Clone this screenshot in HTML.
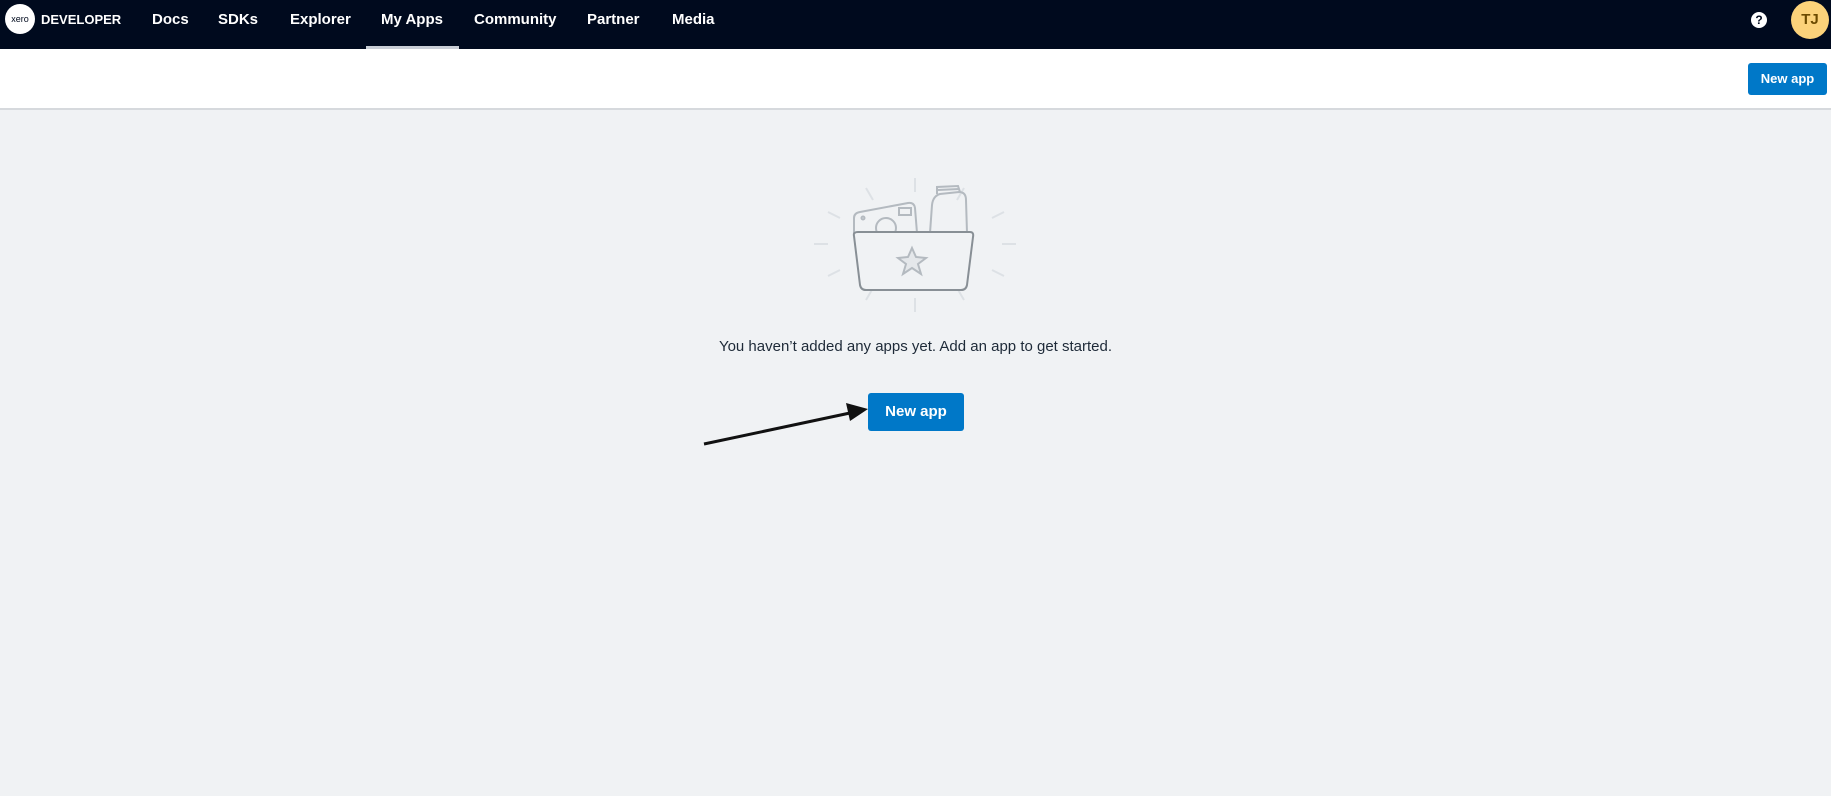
<!DOCTYPE html>
<html><head><meta charset="utf-8"><style>
body{margin:0;width:1831px;height:796px;background:#f0f2f4;font-family:"Liberation Sans",sans-serif;overflow:hidden;position:relative}
.nav{position:absolute;left:0;top:0;width:1831px;height:49px;background:#000a1e}
.nav a{position:absolute;top:0;line-height:40px;color:#fff;font-weight:bold;font-size:15px}
.ul{position:absolute;left:366px;top:46px;width:93px;height:3px;background:#c9ced6}
.bar{position:absolute;top:49px;left:0;width:1831px;height:59px;background:#fff;border-bottom:2px solid #d6d9dd}
.btn{position:absolute;background:#0078c8;color:#fff;font-weight:bold;border-radius:3px;text-align:center}
</style></head><body>
<div class="nav">
<div style="position:absolute;left:5px;top:4px;width:30px;height:30px;border-radius:50%;background:#fff;color:#000a1e;font-size:9px;line-height:30px;text-align:center">xero</div>
<a style="left:41px;font-size:13px">DEVELOPER</a>
<a style="left:152px">Docs</a><a style="left:218px">SDKs</a><a style="left:290px">Explorer</a><a style="left:381px">My Apps</a><a style="left:474px">Community</a><a style="left:587px">Partner</a><a style="left:672px">Media</a>
<div class="ul"></div>
<div style="position:absolute;left:1751px;top:12px;width:16px;height:16px;border-radius:50%;background:#fff;color:#000a1e;font-size:12px;font-weight:bold;text-align:center;line-height:16px">?</div>
<div style="position:absolute;left:1791px;top:1px;width:38px;height:38px;border-radius:50%;background:#fbd27a;color:#6b4a00;font-weight:bold;font-size:15px;text-align:center;line-height:38px">TJ</div>
</div>
<div class="bar"></div>
<div class="btn" style="left:1748px;top:63px;width:79px;height:32px;line-height:32px;font-size:13px">New app</div>
<svg style="position:absolute;left:780px;top:160px" width="260" height="170" viewBox="0 0 260 170" fill="none">
<g stroke="#dde1e5" stroke-width="2"><line x1="135" y1="18" x2="135" y2="32"/><line x1="135" y1="138" x2="135" y2="152"/><line x1="34" y1="84" x2="48" y2="84"/><line x1="222" y1="84" x2="236" y2="84"/><line x1="48" y1="52" x2="60" y2="58"/><line x1="212" y1="58" x2="224" y2="52"/><line x1="48" y1="116" x2="60" y2="110"/><line x1="212" y1="110" x2="224" y2="116"/><line x1="86" y1="28" x2="93" y2="40"/><line x1="86" y1="140" x2="93" y2="128"/><line x1="177" y1="40" x2="184" y2="28"/><line x1="177" y1="128" x2="184" y2="140"/></g>
<g stroke="#b4bac0" stroke-width="2"><path d="M74 74 V58 Q74 53 80 52 L128 43 Q134 42 135 48 L137 73"/><circle cx="106" cy="68" r="10"/><rect x="119" y="48" width="12" height="7"/><circle cx="83" cy="58" r="1.5"/><path d="M150 73 L152 45 Q153 36 160 34 L179 32 Q186 32 186 40 L187 73"/><path d="M157 34 L157 27 L178 26 L180 32"/><line x1="158" y1="30" x2="179" y2="29"/></g>
<path d="M74 76 Q73 72 78 72 L190 72 Q194 72 193 77 L187 125 Q186 130 181 130 L86 130 Q81 130 80 125 Z" stroke="#888f95" stroke-width="2" fill="#f0f2f4"/>
<path d="M132 88 L136 97 L146 98 L138 104 L141 114 L132 108 L123 114 L126 104 L118 98 L128 97 Z" stroke="#b4bac0" stroke-width="2" fill="#e4e7ea"/>
</svg>
<div style="position:absolute;left:0;width:1831px;top:338px;text-align:center;font-size:15px;color:#1e2a38">You haven’t added any apps yet. Add an app to get started.</div>
<div class="btn" style="left:868px;top:393px;width:96px;height:38px;line-height:38px;font-size:15px">New app</div>
<svg style="position:absolute;left:0;top:0" width="1831" height="796"><line x1="704" y1="444" x2="850" y2="413" stroke="#111" stroke-width="3"/><path d="M868 409 L846 403 L850 421 Z" fill="#111"/></svg>
</body></html>
